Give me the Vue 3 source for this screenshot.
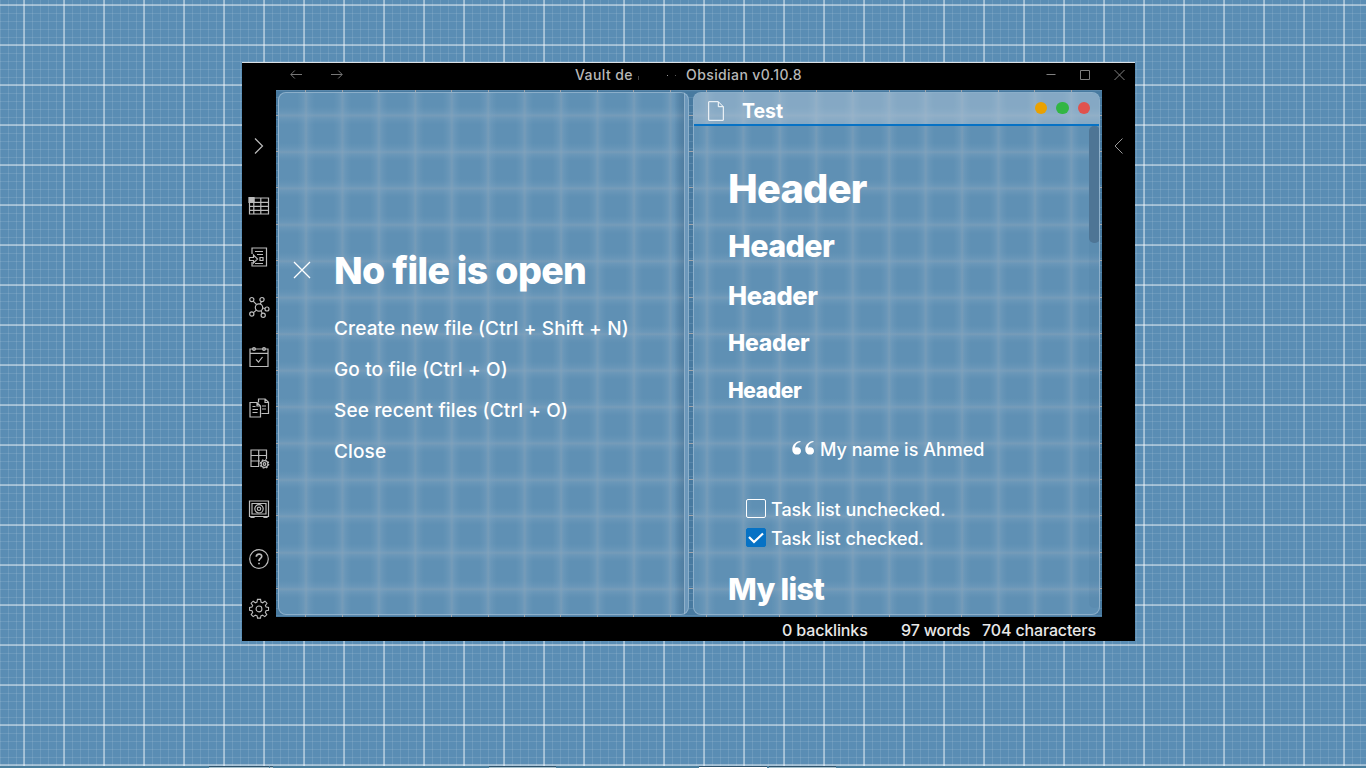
<script setup>
const headers = [1, 2, 3, 4, 5]
const actions = [
  'Create new file (Ctrl + Shift + N)',
  'Go to file (Ctrl + O)',
  'See recent files (Ctrl + O)',
  'Close',
]
</script>

<template>
  <div class="desktop">
    <div class="window">
      <header class="titlebar">
        <div class="nav">
          <svg width="12" height="10" viewBox="0 0 12 10"><path d="M12 5.500H1M4.800 1.500L.8 5.500l4 4" /></svg>
          <svg width="12" height="10" viewBox="0 0 12 10"><path d="M0 5.500h11M7.200 1.500l4 4-4 4" /></svg>
        </div>
        <div class="title"><span class="vault">Vault de</span><span class="marks"><i class="m1"></i><i class="m2"></i><i class="m3"></i></span><span class="app-name">Obsidian v0.10.8</span></div>
        <div class="controls">
          <svg width="10" height="10" viewBox="0 0 10 10"><path d="M.5 5.500h9" /></svg>
          <svg width="10" height="10" viewBox="0 0 10 10"><path d="M.5.5h9v9h-9z" /></svg>
          <svg width="11" height="10" viewBox="0 0 11 10"><path d="M.5 0l10 10M10.500 0l-10 10" /></svg>
        </div>
      </header>

      <div class="body">
        <aside class="ribbon">
          <svg class="chev" width="10" height="16" viewBox="0 0 10 16"><path d="M1 .5L8.500 8 1 15.500" /></svg>
          <!-- table -->
          <svg viewBox="0 0 22 22"><path d="M1.500 3h19v16h-19zM1.500 7.300h19M1.500 11.400h19M1.500 15.400h19M5.800 3v16M12.800 3v16" /><path class="solid" d="M1 2.500h5v5H1z" /></svg>
          <!-- note arrow -->
          <svg viewBox="0 0 22 22"><path d="M4 8V2h14.500v18H4V16M7 5.500h8M9 8.500h6M12 11.500h3v3h-3zM7 17.500h8M1.500 11.500h4V9l4 4-4 4v-2.500h-4z" /></svg>
          <!-- graph -->
          <svg viewBox="0 0 22 22"><circle cx="11" cy="11.500" r="3.700" /><circle cx="3.800" cy="3.600" r="2.100" /><circle cx="14" cy="3.600" r="2.100" /><circle cx="19" cy="13" r="2" /><circle cx="3.800" cy="18" r="2.100" /><circle cx="15.200" cy="19.300" r="2.100" /><path d="M5.200 5.200l3.300 3.300M13.300 5.700l-1 2.400M14.700 12l2.300.5M5.400 16.600l3-2.500M13 14.800l1.300 2.600" /></svg>
          <!-- calendar -->
          <svg viewBox="0 0 22 22"><path d="M2 3h18v17.500H2zM2 7.300h18M8 13.300l2.500 2.800L14.500 11" /><circle cx="6" cy="3" r="1.400" /><circle cx="16" cy="3" r="1.400" /></svg>
          <!-- documents -->
          <svg viewBox="0 0 22 22"><path d="M10.500 5.500V2h6.700l3.300 3.300v11.200h-7M17 2v3.500h3.500M2 5.500h7l3.500 3.500v11H2zM9 5.500V9h3.500M4.500 9.500h3M4.500 12.500H10M4.500 15.500h5M14 9h4M14 12h4" /></svg>
          <!-- table gear -->
          <svg viewBox="0 0 22 22"><path d="M11 19.500H3V3h15.500v9M3 8.500h15.500M3 14h9M10.700 3v16.500" /><circle cx="16.500" cy="17" r="3.300" /><circle cx="16.500" cy="17" r="1.300" /><circle cx="16.500" cy="17" r="4.200" stroke-dasharray="1.650 1.650" /></svg>
          <!-- safe -->
          <svg viewBox="0 0 22 22"><path d="M1.500 3h19v15.500h-19zM4 5.500h14v10.500H4zM3 18.500V19.500h3v-1M16 18.500V19.500h3v-1" /><circle cx="11" cy="10.800" r="4.200" /><circle cx="11" cy="10.800" r="1.700" /></svg>
          <!-- help -->
          <svg viewBox="0 0 22 22"><circle cx="11" cy="11" r="9.300" /><path d="M8.300 8.800c.1-3.800 5.600-3.500 5.400-.3-.1 2-2.700 2-2.700 4.400M11 14.700v1.500" stroke-width="1.700" /></svg>
          <!-- settings -->
          <svg viewBox="0 -1 22 24"><path d="M9.300.5h3.400l.5 2.900 1.800.8 2.500-1.700 2.200 2.200L18 7.200l.8 1.700 2.600.5v3l-2.700.5-.8 1.800 1.600 2.400-2.200 2.200-2.500-1.600-1.700.8-.5 2.400H9.400l-.5-2.500-1.800-.7-2.400 1.600-2.200-2.200 1.600-2.400-.7-1.800-2.700-.5v-3l2.600-.5.8-1.700-1.700-2.500 2.200-2.200 2.500 1.700 1.700-.8z" /><circle cx="11" cy="10.900" r="3.200" /></svg>
        </aside>

        <main class="workspace">
          <section class="pane empty-pane">
            <div class="empty-inner">
              <svg class="close" width="18" height="18" viewBox="0 0 18 18"><path d="M1 1l16 16M17 1L1 17" /></svg>
              <div>
                <h1 class="empty-title">No file is open</h1>
                <p v-for="a in actions" :key="a" class="action">{{ a }}</p>
              </div>
            </div>
          </section>
          <section class="pane note-pane">
            <div class="note-head">
              <svg width="16" height="20" viewBox="0 0 16 20"><path d="M.7.7h9.600l5 5v13.600H.7zM10.300.7v5h5" /></svg>
              <span class="note-title">Test</span>
              <div class="dots"><i class="amber"></i><i class="green"></i><i class="red"></i></div>
            </div>
            <div class="note-body">
              <div class="doc">
                <div v-for="n in headers" :key="n" :class="['hd', 'h' + n]">Header</div>
                <div class="quote">
                  <svg width="23" height="14" viewBox="0 0 23 14"><path d="M8.500 0v1C5.200 1.800 3.200 3.800 3 6.700c3.500-1.200 6 .5 6 3.200C9 12 7.200 13.600 4.900 13.600 2 13.600.3 11.300.3 8.200.3 3.800 3.500.5 8.500 0zM21.500 0v1c-3.300.8-5.300 2.800-5.500 5.700 3.500-1.200 6 .5 6 3.200 0 2.100-1.800 3.700-4.100 3.700-2.900 0-4.600-2.300-4.600-5.400 0-4.400 3.200-7.700 8.200-8.200z" /></svg>
                  <span>My name is Ahmed</span>
                </div>
                <div class="task"><span class="box"></span><span>Task list unchecked.</span></div>
                <div class="task"><span class="box checked"><svg width="16" height="12" viewBox="0 0 16 12"><path d="M1 5L6 10 15 1.500" /></svg></span><span>Task list checked.</span></div>
                <div class="hd list">My list</div>
              </div>
              <div class="scroll"><div class="thumb"></div></div>
            </div>
          </section>
        </main>

        <aside class="right-rail">
          <svg class="chev" width="10" height="16" viewBox="0 0 10 16"><path d="M8.500 .5L1 8 8.500 15.500" /></svg>
        </aside>
      </div>

      <footer class="status">
        <span class="s1">0 backlinks</span><span class="s2">97 words</span><span class="s3">704 characters</span>
      </footer>
    </div>
    <div class="taskbar"><i class="t1"></i><i class="t2"></i><i class="t3"></i><i class="t4"></i><i class="t5"></i></div>
  </div>
</template>

<style>
body {
  margin: 0;
  overflow: hidden;
}
</style>

<style scoped>
* {
  box-sizing: border-box;
}
svg {
  display: block;
  fill: none;
  stroke: currentColor;
  flex: none;
}
.desktop {
  width: 1366px;
  height: 768px;
  overflow: hidden;
  position: relative;
  padding: 62px 0 0 242px;
  font-family: Inter, 'Liberation Sans', sans-serif;
  color: #fff;
  background-color: #5a8db4;
  background-image:
    linear-gradient(90deg, rgba(255, 255, 255, 0.4) 2px, transparent 2px),
    linear-gradient(rgba(255, 255, 255, 0.4) 2px, transparent 2px),
    linear-gradient(90deg, rgba(255, 255, 255, 0.1) 1px, transparent 1px),
    linear-gradient(rgba(255, 255, 255, 0.1) 1px, transparent 1px);
  background-size: 40px 40px, 40px 40px, 8px 8px, 8px 8px;
  background-position: 23px 0, 0 4px, 0 0, 0 5px;
}
.window {
  width: 893px;
  height: 579px;
  background: #000;
  border-top: 1px solid #d9e0e6;
  display: flex;
  flex-direction: column;
}
.titlebar {
  height: 27px;
  display: flex;
  flex: none;
}
.nav {
  display: flex;
  gap: 29px;
  padding: 6px 0 0 48px;
  color: #777;
}
.title {
  display: flex;
  margin-left: 232px;
  font-size: 14px;
  line-height: 24px;
  font-weight: 550;
  letter-spacing: 0.4px;
  color: #b8b8b8;
  white-space: nowrap;
}
.vault {
  width: 63px;
}
.marks {
  width: 48px;
  display: flex;
  align-items: flex-start;
}
.marks i {
  width: 1px;
  height: 1px;
  background: #999;
  margin-top: 12px;
}
.marks .m1 {
  height: 4px;
  margin-top: 13px;
  background: #444;
}
.marks .m2 {
  margin-left: 28px;
}
.marks .m3 {
  margin-left: 7px;
  background: #555;
}
.controls {
  display: flex;
  gap: 24px;
  padding-top: 7px;
  margin-left: auto;
  margin-right: 10px;
  color: #808080;
}
.controls svg:first-child {
  margin-top: -1px;
}
.body {
  display: flex;
  height: 527px;
}
.ribbon {
  width: 34px;
  color: #bcbcbc;
  display: flex;
  flex-direction: column;
  align-items: center;
  gap: 28.400px;
  padding-top: 48px;
}
.ribbon svg {
  width: 22px;
  height: 22px;
  stroke-width: 1.200;
}
.ribbon .solid {
  fill: currentColor;
}
.ribbon .chev {
  width: 10px;
  height: 16px;
  margin-bottom: 12.800px;
}
.workspace {
  width: 826px;
  display: flex;
  gap: 4px;
  padding: 2px;
  background-color: #487aa0;
  background-image:
    repeating-linear-gradient(90deg, transparent 0 29.300px, #a3a6ab 29.300px 30.300px, transparent 30.300px 36.450px),
    repeating-linear-gradient(transparent 0 24.500px, #a3a6ab 24.500px 25.500px, transparent 25.500px 36.450px),
    repeating-linear-gradient(rgba(140, 175, 205, 0.25) 0 1px, transparent 1px 7.290px);
}
.pane {
  --band: transparent 0, rgba(128, 165, 194, 0.12) 3px, rgba(128, 165, 194, 0.36) 7px, rgba(138, 166, 188, 0.56) 9px, rgba(128, 165, 194, 0.36) 11px, rgba(128, 165, 194, 0.12) 15px, transparent 18px;
  height: 523px;
  border: 1px solid rgba(165, 192, 214, 0.65);
  border-radius: 8px;
  overflow: hidden;
  background-color: #5f90b4;
}
.empty-pane {
  width: 411px;
  background-image:
    linear-gradient(90deg, transparent 405px, #8fb0ca 405px 406px, #6d98bb 406px),
    linear-gradient(90deg, transparent 395px, rgba(50, 90, 125, 0.35) 405px, transparent 405px),
    linear-gradient(90deg, var(--band)),
    linear-gradient(var(--band));
  background-size: 100% 100%, 100% 100%, 36.450px 100%, 100% 36.450px;
  background-position: 0 0, 0 0, 18px 0, 0 13.500px;
}
.note-pane {
  width: 407px;
  background-image:
    linear-gradient(90deg, var(--band)),
    linear-gradient(var(--band));
  background-size: 36.450px 100%, 100% 36.450px;
  background-position: 4px 0, 0 13.500px;
}
.empty-inner {
  display: flex;
  padding: 157px 0 0 14px;
}
.close {
  margin: 11px 23px 0 0;
  stroke-width: 1.300;
}
.empty-title {
  margin: 0 0 16px;
  font-size: 37.500px;
  line-height: 42px;
  font-weight: 800;
  letter-spacing: -0.63px;
  white-space: nowrap;
}
.action {
  margin: 0;
  font-size: 19px;
  font-weight: 450;
  line-height: 41px;
  letter-spacing: 0.14px;
  white-space: nowrap;
}
.note-head {
  height: 33px;
  border-bottom: 2px solid #0672c5;
  background: rgba(190, 205, 220, 0.4);
  display: flex;
  align-items: flex-start;
}
.note-head svg {
  margin: 8px 0 0 14px;
}
.note-title {
  margin-left: 18px;
  font-size: 19.500px;
  font-weight: 700;
  line-height: 37px;
}
.dots {
  display: flex;
  gap: 9px;
  margin: 8.500px 9px 0 auto;
}
.dots i {
  width: 12.500px;
  height: 12.500px;
  border-radius: 50%;
}
.amber {
  background: #eaa100;
}
.green {
  background: #32b643;
}
.red {
  background: #e0524d;
}
.note-body {
  height: 488px;
  display: flex;
}
.doc {
  width: 395px;
  flex: none;
  padding: 38px 0 0 34px;
}
.hd {
  font-weight: 800;
  white-space: nowrap;
}
.h1 {
  font-size: 39.700px;
  line-height: 50px;
  letter-spacing: -0.72px;
}
.h2 {
  font-size: 30.500px;
  line-height: 40px;
  margin-top: 12px;
  letter-spacing: -0.65px;
}
.h3 {
  font-size: 25.500px;
  line-height: 34px;
  margin-top: 13px;
  letter-spacing: -0.4px;
}
.h4 {
  font-size: 23px;
  line-height: 30px;
  margin-top: 15px;
  letter-spacing: -0.25px;
}
.h5 {
  font-size: 21px;
  line-height: 28px;
  margin-top: 19px;
  letter-spacing: -0.4px;
}
.quote {
  display: flex;
  align-items: center;
  height: 30px;
  margin: 29px 0 31px 63px;
  font-size: 18px;
  font-weight: 450;
}
.quote svg {
  fill: #fff;
  stroke: none;
  margin: -2px 5px 0 1px;
}
.task {
  display: flex;
  align-items: center;
  height: 29px;
  margin-left: 18px;
  font-size: 18px;
  font-weight: 450;
  letter-spacing: -0.05px;
  white-space: nowrap;
}
.box {
  width: 20px;
  height: 19px;
  margin: -2px 5px 0 0;
  border: 1px solid #fff;
  border-radius: 2px;
  display: grid;
  place-items: center;
}
.checked {
  background: #0672c5;
  border-color: #0672c5;
}
.checked svg {
  stroke-width: 2.200;
}
.list {
  font-size: 30.500px;
  line-height: 40px;
  margin-top: 16px;
  letter-spacing: -0.7px;
}
.scroll {
  width: 11px;
  flex: none;
  height: 482px;
  background: rgba(60, 105, 145, 0.1);
  border-radius: 5px;
}
.thumb {
  height: 117px;
  border-radius: 5px;
  background: #4e7595;
}
.right-rail {
  width: 33px;
  padding: 48px 0 0 12px;
  color: #999;
}
.status {
  display: flex;
  height: 24px;
  padding-left: 540px;
  font-size: 16px;
  line-height: 26px;
  font-weight: 450;
  letter-spacing: -0.14px;
  color: #e8e8e8;
  white-space: nowrap;
}
.s1 {
  width: 119px;
}
.s2 {
  width: 81px;
}
.taskbar {
  position: absolute;
  left: 0;
  bottom: 0;
  width: 1366px;
  height: 2px;
  display: flex;
  background: #4a7f9e;
}
.taskbar i {
  height: 2px;
  background: #a3bfcc;
  border-top: 1px solid #2f536c;
}
.t1 {
  width: 60px;
  margin-left: 209px;
}
.t2 {
  width: 3px;
  margin-left: 1px;
}
.t3 {
  width: 67px;
  margin-left: 216px;
}
.taskbar .t4 {
  width: 68px;
  margin-left: 143px;
  background: #fff;
}
.t5 {
  width: 67px;
  margin-left: 2px;
}
</style>
